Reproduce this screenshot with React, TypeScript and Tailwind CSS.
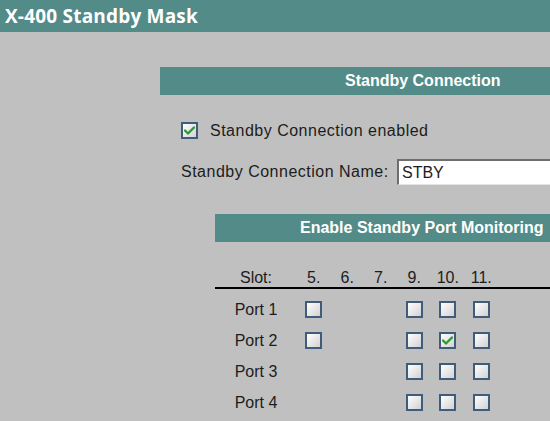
import React from "react";

const Box = ({ checked = false }: { checked?: boolean }) => (
  <div className="w-[17px] h-[17px] border-2 border-[#3f5c7c] bg-gradient-to-br from-white to-[#d2d2d2] flex items-center justify-center">
    {checked && (
      <svg width="11" height="9" viewBox="0 0 11 9">
        <path d="M1 4.5 L4 7.5 L10 1.5" fill="none" stroke="#2e9a2e" strokeWidth="2.4" strokeLinecap="round" strokeLinejoin="round" />
      </svg>
    )}
  </div>
);

const cols = ["5.", "6.", "7.", "9.", "10.", "11."];
const ports: { name: string; boxes: (null | boolean)[] }[] = [
  { name: "Port 1", boxes: [false, null, null, false, false, false] },
  { name: "Port 2", boxes: [false, null, null, false, true, false] },
  { name: "Port 3", boxes: [null, null, null, false, false, false] },
  { name: "Port 4", boxes: [null, null, null, false, false, false] },
];

export default function App() {
  return (
    <div className="w-[550px] h-[421px] overflow-hidden bg-[#c0c0c0] text-[#1c1c1c] text-[16px]" style={{ fontFamily: '"Liberation Sans", Arial, sans-serif' }}>
      <div className="h-[32px] bg-[#528b88] flex items-center pl-[5px]">
        <span className="text-white font-bold text-[19px] tracking-[0.2px] whitespace-nowrap" style={{ fontFamily: '"Open Sans", "DejaVu Sans", sans-serif' }}>X-400 Standby Mask</span>
      </div>
      <div className="pl-[160px] pt-[35px] flex flex-col">
        <div className="h-[28px] w-[600px] bg-[#528b88] flex items-center pl-[185px]">
          <span className="text-white font-bold text-[16px] whitespace-nowrap">Standby Connection</span>
        </div>
        <div className="mt-[27px] ml-[21px] h-[17px] flex items-center gap-[12px]">
          <Box checked />
          <span className="leading-[18px] tracking-[0.5px] whitespace-nowrap">Standby Connection enabled</span>
        </div>
        <div className="mt-[20px] ml-[21px] h-[26px] flex items-center">
          <span className="w-[216px] shrink-0 leading-[18px] tracking-[0.5px] whitespace-nowrap">Standby Connection Name:</span>
          <div className="h-[26px] w-[200px] shrink-0 bg-white border-t-2 border-l-2 border-[#6e6e6e] border-b border-r border-b-[#e4e4e4] border-r-[#e4e4e4] flex items-center pl-[3px]">
            <span className="leading-[18px]">STBY</span>
          </div>
        </div>
        <div className="mt-[29px] ml-[55px] flex flex-col">
          <div className="h-[28px] w-[600px] bg-[#528b88] flex items-center pl-[85px]">
            <span className="text-white font-bold text-[16px] whitespace-nowrap">Enable Standby Port Monitoring</span>
          </div>
          <div className="h-[47px] w-[600px] border-b-2 border-black flex items-end">
            <div className="w-[82px] text-center leading-[18px]">Slot:</div>
            {cols.map((c) => (
              <div key={c} className="w-[33.5px] text-center leading-[18px]">{c}</div>
            ))}
          </div>
          <div className="mt-[5px] flex flex-col">
            {ports.map((p) => (
              <div key={p.name} className="h-[31px] flex items-center">
                <div className="w-[82px] text-center leading-[18px]">{p.name}</div>
                {p.boxes.map((b, i) => (
                  <div key={i} className="w-[33.5px] flex justify-center">
                    {b !== null && <Box checked={b} />}
                  </div>
                ))}
              </div>
            ))}
          </div>
        </div>
      </div>
    </div>
  );
}
